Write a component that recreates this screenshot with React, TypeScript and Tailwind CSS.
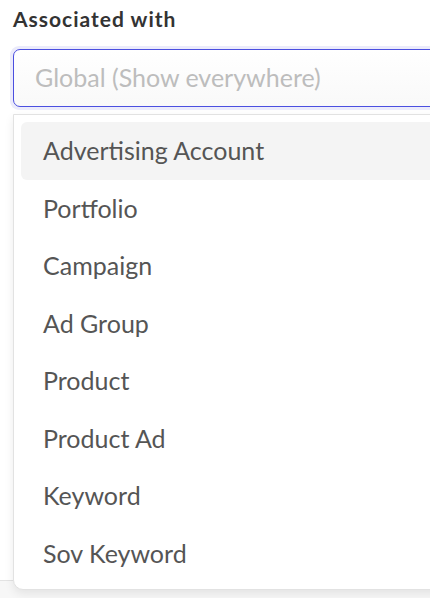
const options = [
	'Advertising Account',
	'Portfolio',
	'Campaign',
	'Ad Group',
	'Product',
	'Product Ad',
	'Keyword',
	'Sov Keyword'
];

const App = () => {
	return (
		<div className="relative h-[598px] w-[430px] overflow-hidden bg-white font-['Lato',sans-serif]">
			<div className="w-[480px] pl-[13px] pt-[6px]">
				<p className="text-[21px] font-bold leading-[26px] tracking-[1px] text-[#333]">Associated with</p>
				<div className="mt-[14px] rounded-[9px] bg-[#ebebfb] p-[3px] -ml-[3px]">
					<div className="flex h-[58px] items-center rounded-[7px] border border-[#4b4fe0] bg-gradient-to-b from-white to-[#f9f9f9] px-[21px]">
						<span className="text-[25px] text-[#bdbdbd]">Global (Show everywhere)</span>
					</div>
				</div>
			</div>
			<div className="absolute left-0 top-[580px] h-[18px] w-full border-t border-[#e3e3e3] bg-[#f7f7f7]" />
			<div className="absolute left-[13px] top-[114px] w-[470px] rounded-b-[10px] border border-[#e2e2e2] bg-white p-[7px] shadow-[0_4px_10px_rgba(0,0,0,0.08)]">
				{options.map((o, i) => (
					<div
						key={o}
						className={`flex h-[57.5px] items-center rounded-[6px] pl-[22px] text-[25px] text-[#555] ${i === 0 ? 'bg-[#f4f4f4]' : ''}`}>
						{o}
					</div>
				))}
			</div>
		</div>
	);
};

export default App;
